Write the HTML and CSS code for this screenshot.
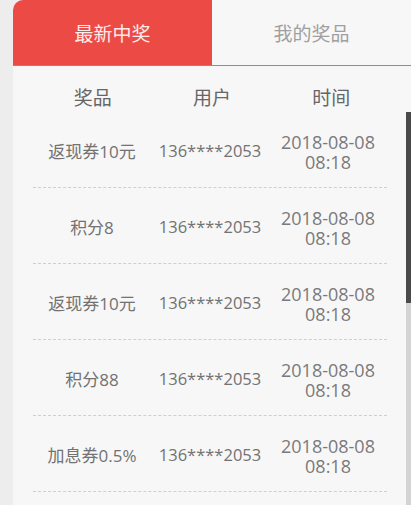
FILE: index.html
```html
<!DOCTYPE html>
<html lang="zh-CN">
<head>
<meta charset="utf-8">
<title>中奖记录</title>
<link rel="stylesheet" href="styles.css">
</head>
<body>
<div class="page">
  <div class="card">
    <div class="tabs">
      <div class="tab tab-active">最新中奖</div>
      <div class="tab">我的奖品</div>
    </div>
    <div class="head">
      <div class="cell">奖品</div>
      <div class="cell">用户</div>
      <div class="cell">时间</div>
    </div>
    <div class="list">
      <div class="row">
        <div class="cell prize">返现券10元</div>
        <div class="cell user">136****2053</div>
        <div class="cell time"><div>2018-08-08</div><div>08:18</div></div>
      </div>
      <div class="row">
        <div class="cell prize">积分8</div>
        <div class="cell user">136****2053</div>
        <div class="cell time"><div>2018-08-08</div><div>08:18</div></div>
      </div>
      <div class="row">
        <div class="cell prize">返现券10元</div>
        <div class="cell user">136****2053</div>
        <div class="cell time"><div>2018-08-08</div><div>08:18</div></div>
      </div>
      <div class="row">
        <div class="cell prize">积分88</div>
        <div class="cell user">136****2053</div>
        <div class="cell time"><div>2018-08-08</div><div>08:18</div></div>
      </div>
      <div class="row">
        <div class="cell prize">加息券0.5%</div>
        <div class="cell user">136****2053</div>
        <div class="cell time"><div>2018-08-08</div><div>08:18</div></div>
      </div>
    </div>
  </div>
  <div class="scroll-track"></div>
  <div class="scroll-thumb"></div>
</div>
</body>
</html>
```
FILE: styles.css
```css
html, body {
  margin: 0;
  padding: 0;
  height: 100%;
  overflow: hidden;
  background: #ededed;
  font-family: "Open Sans", "Noto Sans CJK SC", sans-serif;
}

.page {
  position: relative;
  height: 505px;
  padding-left: 13px;
}

.card {
  height: 100%;
  background: #f7f7f7;
  border-top-left-radius: 10px;
  overflow: hidden;
}

.tabs {
  display: flex;
  height: 65px;
  border-bottom: 1px solid #e06a66;
}

.tab {
  flex: 1;
  display: flex;
  align-items: center;
  justify-content: center;
  font-size: 19px;
  color: #a0a0a0;
  background: #f7f7f7;
}

.tab-active {
  background: #eb4b44;
  color: #fdeceb;
}

.head {
  display: grid;
  grid-template-columns: 1fr 1fr 1fr;
  margin: 0 20px;
  padding-top: 19px;
  height: 27px;
  line-height: 26px;
  font-size: 19px;
  color: #666;
  text-align: center;
}

.list {
  margin: 0 24px 0 20px;
}

.row {
  display: grid;
  grid-template-columns: 1fr 1fr 1fr;
  align-items: center;
  height: 75px;
  border-bottom: 1px dashed #cfcfcf;
  text-align: center;
  color: #727272;
}

.prize {
  font-size: 17px;
  padding-top: 2px;
}

.user {
  font-size: 16.5px;
  padding-top: 2px;
}

.time {
  display: flex;
  flex-direction: column;
  gap: 0;
  font-size: 18px;
  line-height: 20px;
  padding-top: 4px;
  color: #7a7a7a;
}

.scroll-track {
  position: absolute;
  right: 0;
  top: 303px;
  bottom: 0;
  width: 5px;
  background: #d4d4d4;
}

.scroll-thumb {
  position: absolute;
  right: 0;
  top: 112px;
  width: 5px;
  height: 191px;
  background: #4a4a4a;
}
```
